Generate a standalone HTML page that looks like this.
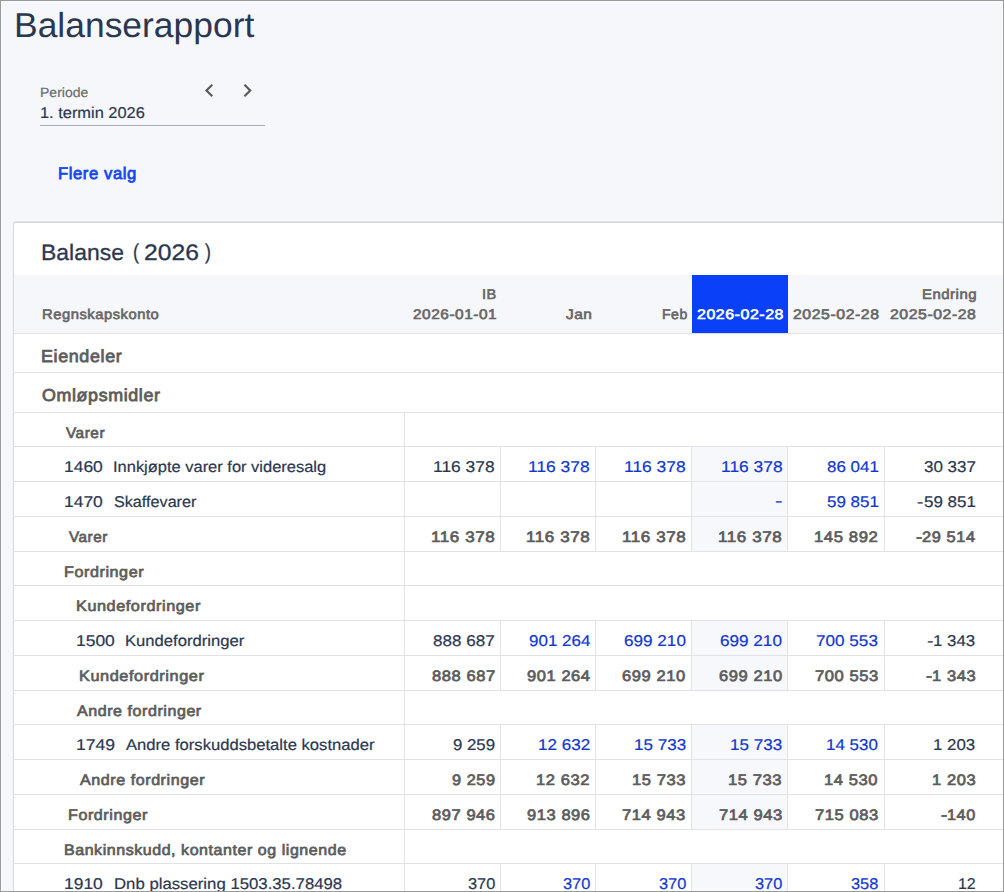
<!DOCTYPE html>
<html lang="no">
<head>
<meta charset="utf-8">
<title>Balanserapport</title>
<style>
html,body{margin:0;padding:0;width:1004px;height:892px;overflow:hidden}
#root{position:absolute;left:0;top:0;width:1004px;height:892px;overflow:hidden}
body{width:1004px;height:892px;position:relative;overflow:hidden;background:#f6f7fb;font-family:"Liberation Sans", sans-serif;text-rendering:geometricPrecision}
.t{position:absolute;white-space:pre;line-height:20px;display:block;transform-origin:0 0}
.b{position:absolute}
#panel{position:absolute;left:13px;top:222px;width:991px;height:670px;background:#fff;border:1px solid #d6d8dd;border-top-color:#d2d4d9;border-bottom:0;border-radius:3px 3px 0 0;box-sizing:border-box;box-shadow:0 -1px 0 #e4e6ea}
#frame{position:absolute;left:0;top:0;width:1004px;height:892px;box-sizing:border-box;border:1px solid #9a9a9a;z-index:9;pointer-events:none}
#frame2{position:absolute;left:1px;top:1px;width:1px;height:890px;background:#fbfcfe}
#frame3{position:absolute;left:1002px;top:1px;width:1px;height:890px;background:#fcfdfe}
#uline{position:absolute;left:40px;top:125px;width:225px;height:1px;background:#a9adb6}
svg.chev{position:absolute;overflow:visible}
</style>
</head>
<body>
<div id="root">
<div id="frame3"></div>
<div id="panel"></div>
<div class="b" style="left:692px;top:447px;width:95px;height:34px;background:#f7f8fc"></div>
<div class="b" style="left:692px;top:482px;width:95px;height:34px;background:#f7f8fc"></div>
<div class="b" style="left:692px;top:517px;width:95px;height:34px;background:#f7f8fc"></div>
<div class="b" style="left:692px;top:621px;width:95px;height:34px;background:#f7f8fc"></div>
<div class="b" style="left:692px;top:656px;width:95px;height:34px;background:#f7f8fc"></div>
<div class="b" style="left:692px;top:725px;width:95px;height:34px;background:#f7f8fc"></div>
<div class="b" style="left:692px;top:760px;width:95px;height:34px;background:#f7f8fc"></div>
<div class="b" style="left:692px;top:795px;width:95px;height:34px;background:#f7f8fc"></div>
<div class="b" style="left:692px;top:864px;width:95px;height:28px;background:#f7f8fc"></div>
<div class="b" style="left:14px;top:275px;width:989px;height:58px;background:#f6f7fb"></div>
<div class="b" style="left:692px;top:275px;width:96px;height:58px;background:#0a41f8"></div>
<div class="b" style="left:14px;top:333px;width:989px;height:1px;background:#e2e2e4"></div>
<div class="b" style="left:14px;top:372px;width:989px;height:1px;background:#e2e2e4"></div>
<div class="b" style="left:14px;top:412px;width:989px;height:1px;background:#e2e2e4"></div>
<div class="b" style="left:14px;top:446px;width:989px;height:1px;background:#e2e2e4"></div>
<div class="b" style="left:14px;top:481px;width:989px;height:1px;background:#e2e2e4"></div>
<div class="b" style="left:14px;top:516px;width:989px;height:1px;background:#e2e2e4"></div>
<div class="b" style="left:14px;top:551px;width:989px;height:1px;background:#e2e2e4"></div>
<div class="b" style="left:14px;top:585px;width:989px;height:1px;background:#e2e2e4"></div>
<div class="b" style="left:14px;top:620px;width:989px;height:1px;background:#e2e2e4"></div>
<div class="b" style="left:14px;top:655px;width:989px;height:1px;background:#e2e2e4"></div>
<div class="b" style="left:14px;top:690px;width:989px;height:1px;background:#e2e2e4"></div>
<div class="b" style="left:14px;top:724px;width:989px;height:1px;background:#e2e2e4"></div>
<div class="b" style="left:14px;top:759px;width:989px;height:1px;background:#e2e2e4"></div>
<div class="b" style="left:14px;top:794px;width:989px;height:1px;background:#e2e2e4"></div>
<div class="b" style="left:14px;top:829px;width:989px;height:1px;background:#e2e2e4"></div>
<div class="b" style="left:14px;top:863px;width:989px;height:1px;background:#e2e2e4"></div>
<div class="b" style="left:404px;top:412px;width:1px;height:480px;background:#e2e2e4"></div>
<div class="b" style="left:500px;top:446px;width:1px;height:35px;background:#e2e2e4"></div>
<div class="b" style="left:595px;top:446px;width:1px;height:35px;background:#e2e2e4"></div>
<div class="b" style="left:691px;top:446px;width:1px;height:35px;background:#e2e2e4"></div>
<div class="b" style="left:787px;top:446px;width:1px;height:35px;background:#e2e2e4"></div>
<div class="b" style="left:884px;top:446px;width:1px;height:35px;background:#e2e2e4"></div>
<div class="b" style="left:500px;top:481px;width:1px;height:35px;background:#e2e2e4"></div>
<div class="b" style="left:595px;top:481px;width:1px;height:35px;background:#e2e2e4"></div>
<div class="b" style="left:691px;top:481px;width:1px;height:35px;background:#e2e2e4"></div>
<div class="b" style="left:787px;top:481px;width:1px;height:35px;background:#e2e2e4"></div>
<div class="b" style="left:884px;top:481px;width:1px;height:35px;background:#e2e2e4"></div>
<div class="b" style="left:500px;top:516px;width:1px;height:35px;background:#e2e2e4"></div>
<div class="b" style="left:595px;top:516px;width:1px;height:35px;background:#e2e2e4"></div>
<div class="b" style="left:691px;top:516px;width:1px;height:35px;background:#e2e2e4"></div>
<div class="b" style="left:787px;top:516px;width:1px;height:35px;background:#e2e2e4"></div>
<div class="b" style="left:884px;top:516px;width:1px;height:35px;background:#e2e2e4"></div>
<div class="b" style="left:500px;top:620px;width:1px;height:35px;background:#e2e2e4"></div>
<div class="b" style="left:595px;top:620px;width:1px;height:35px;background:#e2e2e4"></div>
<div class="b" style="left:691px;top:620px;width:1px;height:35px;background:#e2e2e4"></div>
<div class="b" style="left:787px;top:620px;width:1px;height:35px;background:#e2e2e4"></div>
<div class="b" style="left:884px;top:620px;width:1px;height:35px;background:#e2e2e4"></div>
<div class="b" style="left:500px;top:655px;width:1px;height:35px;background:#e2e2e4"></div>
<div class="b" style="left:595px;top:655px;width:1px;height:35px;background:#e2e2e4"></div>
<div class="b" style="left:691px;top:655px;width:1px;height:35px;background:#e2e2e4"></div>
<div class="b" style="left:787px;top:655px;width:1px;height:35px;background:#e2e2e4"></div>
<div class="b" style="left:884px;top:655px;width:1px;height:35px;background:#e2e2e4"></div>
<div class="b" style="left:500px;top:724px;width:1px;height:35px;background:#e2e2e4"></div>
<div class="b" style="left:595px;top:724px;width:1px;height:35px;background:#e2e2e4"></div>
<div class="b" style="left:691px;top:724px;width:1px;height:35px;background:#e2e2e4"></div>
<div class="b" style="left:787px;top:724px;width:1px;height:35px;background:#e2e2e4"></div>
<div class="b" style="left:884px;top:724px;width:1px;height:35px;background:#e2e2e4"></div>
<div class="b" style="left:500px;top:759px;width:1px;height:35px;background:#e2e2e4"></div>
<div class="b" style="left:595px;top:759px;width:1px;height:35px;background:#e2e2e4"></div>
<div class="b" style="left:691px;top:759px;width:1px;height:35px;background:#e2e2e4"></div>
<div class="b" style="left:787px;top:759px;width:1px;height:35px;background:#e2e2e4"></div>
<div class="b" style="left:884px;top:759px;width:1px;height:35px;background:#e2e2e4"></div>
<div class="b" style="left:500px;top:794px;width:1px;height:35px;background:#e2e2e4"></div>
<div class="b" style="left:595px;top:794px;width:1px;height:35px;background:#e2e2e4"></div>
<div class="b" style="left:691px;top:794px;width:1px;height:35px;background:#e2e2e4"></div>
<div class="b" style="left:787px;top:794px;width:1px;height:35px;background:#e2e2e4"></div>
<div class="b" style="left:884px;top:794px;width:1px;height:35px;background:#e2e2e4"></div>
<div class="b" style="left:500px;top:863px;width:1px;height:29px;background:#e2e2e4"></div>
<div class="b" style="left:595px;top:863px;width:1px;height:29px;background:#e2e2e4"></div>
<div class="b" style="left:691px;top:863px;width:1px;height:29px;background:#e2e2e4"></div>
<div class="b" style="left:787px;top:863px;width:1px;height:29px;background:#e2e2e4"></div>
<div class="b" style="left:884px;top:863px;width:1px;height:29px;background:#e2e2e4"></div>
<div id="uline"></div>
<svg class="chev" style="left:0;top:0" width="300" height="120" viewBox="0 0 300 120"><g fill="#5b5b5b"><path transform="translate(196.1 77.3) scale(1.1)" d="M15.41 7.41L14 6l-6 6 6 6 1.41-1.41L10.83 12z"/><path transform="translate(234.2 77.3) scale(1.1)" d="M10 6L8.59 7.41 13.17 12l-4.58 4.59L10 18l6-6z"/></g></svg>
<span class="t" style="left:13.59px;top:16.00px;font-size:34.7px;color:#2b3750;transform:scaleX(1.0217)">Balanserapport</span>
<span class="t" style="left:39.75px;top:83.00px;font-size:13.4px;color:#6a6a6a;transform:scaleX(1.0458);-webkit-text-stroke:0.17px #6a6a6a">Periode</span>
<span class="t" style="left:39.75px;top:104.00px;font-size:15.6px;color:#2b3750;transform:scaleX(1.0510);-webkit-text-stroke:0.2px #2b3750">1. termin 2026</span>
<span class="t" style="left:57.61px;top:163.62px;font-size:16.8px;color:#1547ee;transform:scaleX(0.9916);letter-spacing:0.035em;-webkit-text-stroke:0.77px #1547ee">Flere valg</span>
<span class="t" style="left:41.11px;top:243.00px;font-size:22.4px;color:#2b3750;transform:scaleX(1.0249);-webkit-text-stroke:0.29px #2b3750">Balanse</span>
<span class="t" style="left:132.56px;top:242.00px;font-size:21.4px;color:#2b3750;transform:scaleX(0.8333);-webkit-text-stroke:0.28px #2b3750">(</span>
<span class="t" style="left:143.80px;top:243.00px;font-size:22.4px;color:#2b3750;transform:scaleX(1.1021);-webkit-text-stroke:0.29px #2b3750">2026</span>
<span class="t" style="left:204.60px;top:242.00px;font-size:21.4px;color:#2b3750;transform:scaleX(0.8333);-webkit-text-stroke:0.28px #2b3750">)</span>
<span class="t" style="left:42.01px;top:303.68px;font-size:14.0px;color:#666666;transform:scaleX(1.0551);letter-spacing:0.035em;-webkit-text-stroke:0.64px #666666">Regnskapskonto</span>
<span class="t" style="left:482.06px;top:283.68px;font-size:14.0px;color:#666666;transform:scaleX(1.0367);letter-spacing:0.035em;-webkit-text-stroke:0.64px #666666">IB</span>
<span class="t" style="left:412.53px;top:303.68px;font-size:14.0px;color:#666666;transform:scaleX(1.0993);letter-spacing:0.035em;-webkit-text-stroke:0.64px #666666">2026-01-01</span>
<span class="t" style="left:565.50px;top:303.68px;font-size:14.0px;color:#666666;transform:scaleX(1.1000);letter-spacing:0.035em;-webkit-text-stroke:0.64px #666666">Jan</span>
<span class="t" style="left:661.55px;top:303.68px;font-size:14.0px;color:#666666;transform:scaleX(1.0042);letter-spacing:0.035em;-webkit-text-stroke:0.64px #666666">Feb</span>
<span class="t" style="left:696.82px;top:303.68px;font-size:14.0px;color:#ffffff;transform:scaleX(1.1364);letter-spacing:0.035em;-webkit-text-stroke:0.64px #ffffff">2026-02-28</span>
<span class="t" style="left:793.32px;top:303.68px;font-size:14.0px;color:#666666;transform:scaleX(1.1311);letter-spacing:0.035em;-webkit-text-stroke:0.64px #666666">2025-02-28</span>
<span class="t" style="left:889.62px;top:303.68px;font-size:14.0px;color:#666666;transform:scaleX(1.1298);letter-spacing:0.035em;-webkit-text-stroke:0.64px #666666">2025-02-28</span>
<span class="t" style="left:921.50px;top:283.68px;font-size:14.0px;color:#666666;transform:scaleX(1.0660);letter-spacing:0.035em;-webkit-text-stroke:0.64px #666666">Endring</span>
<span class="t" style="left:41.36px;top:345.60px;font-size:17.3px;color:#5c5c5c;transform:scaleX(1.0364);letter-spacing:0.035em;-webkit-text-stroke:0.8px #5c5c5c">Eiendeler</span>
<span class="t" style="left:41.88px;top:384.60px;font-size:17.3px;color:#5c5c5c;transform:scaleX(1.0321);letter-spacing:0.035em;-webkit-text-stroke:0.8px #5c5c5c">Omløpsmidler</span>
<span class="t" style="left:65.81px;top:423.65px;font-size:15.1px;color:#5c5c5c;transform:scaleX(1.0156);letter-spacing:0.035em;-webkit-text-stroke:0.69px #5c5c5c">Varer</span>
<span class="t" style="left:64.18px;top:458.00px;font-size:15.6px;color:#2b3750;transform:scaleX(1.1188);-webkit-text-stroke:0.2px #2b3750">1460</span>
<span class="t" style="left:113.48px;top:458.00px;font-size:15.6px;color:#2b3750;transform:scaleX(1.0553);-webkit-text-stroke:0.2px #2b3750">Innkjøpte varer for videresalg</span>
<span class="t" style="left:433.28px;top:458.00px;font-size:15.6px;color:#2b3750;transform:scaleX(1.1163);-webkit-text-stroke:0.2px #2b3750">116 378</span>
<span class="t" style="left:528.38px;top:458.00px;font-size:15.6px;color:#1237cf;transform:scaleX(1.1163);-webkit-text-stroke:0.2px #1237cf">116 378</span>
<span class="t" style="left:624.38px;top:458.00px;font-size:15.6px;color:#1237cf;transform:scaleX(1.1163);-webkit-text-stroke:0.2px #1237cf">116 378</span>
<span class="t" style="left:720.58px;top:458.00px;font-size:15.6px;color:#1237cf;transform:scaleX(1.1163);-webkit-text-stroke:0.2px #1237cf">116 378</span>
<span class="t" style="left:826.51px;top:458.00px;font-size:15.6px;color:#1237cf;transform:scaleX(1.0892);-webkit-text-stroke:0.2px #1237cf">86 041</span>
<span class="t" style="left:923.61px;top:458.00px;font-size:15.6px;color:#2b3750;transform:scaleX(1.0892);-webkit-text-stroke:0.2px #2b3750">30 337</span>
<span class="t" style="left:64.18px;top:493.00px;font-size:15.6px;color:#2b3750;transform:scaleX(1.1188);-webkit-text-stroke:0.2px #2b3750">1470</span>
<span class="t" style="left:114.02px;top:493.00px;font-size:15.6px;color:#2b3750;transform:scaleX(1.0369);-webkit-text-stroke:0.2px #2b3750">Skaffevarer</span>
<span class="t" style="left:775.38px;top:492.00px;font-size:15.6px;color:#1237cf;transform:scaleX(1.4500);-webkit-text-stroke:0.2px #1237cf">-</span>
<span class="t" style="left:826.51px;top:493.00px;font-size:15.6px;color:#1237cf;transform:scaleX(1.0892);-webkit-text-stroke:0.2px #1237cf">59 851</span>
<span class="t" style="left:923.61px;top:493.00px;font-size:15.6px;color:#2b3750;transform:scaleX(1.0892);-webkit-text-stroke:0.2px #2b3750">59 851</span>
<span class="t" style="left:917.12px;top:493.00px;font-size:15.6px;color:#2b3750;transform:scaleX(1.2500);-webkit-text-stroke:0.2px #2b3750">-</span>
<span class="t" style="left:69.00px;top:527.65px;font-size:15.1px;color:#5c5c5c;transform:scaleX(1.0078);letter-spacing:0.035em;-webkit-text-stroke:0.69px #5c5c5c">Varer</span>
<span class="t" style="left:431.06px;top:527.65px;font-size:15.1px;color:#5c5c5c;transform:scaleX(1.1261);letter-spacing:0.035em;-webkit-text-stroke:0.69px #5c5c5c">116 378</span>
<span class="t" style="left:526.16px;top:527.65px;font-size:15.1px;color:#5c5c5c;transform:scaleX(1.1261);letter-spacing:0.035em;-webkit-text-stroke:0.69px #5c5c5c">116 378</span>
<span class="t" style="left:622.16px;top:527.65px;font-size:15.1px;color:#5c5c5c;transform:scaleX(1.1261);letter-spacing:0.035em;-webkit-text-stroke:0.69px #5c5c5c">116 378</span>
<span class="t" style="left:718.36px;top:527.65px;font-size:15.1px;color:#5c5c5c;transform:scaleX(1.1261);letter-spacing:0.035em;-webkit-text-stroke:0.69px #5c5c5c">116 378</span>
<span class="t" style="left:814.37px;top:527.65px;font-size:15.1px;color:#5c5c5c;transform:scaleX(1.1062);letter-spacing:0.035em;-webkit-text-stroke:0.69px #5c5c5c">145 892</span>
<span class="t" style="left:921.86px;top:527.65px;font-size:15.1px;color:#5c5c5c;transform:scaleX(1.0860);letter-spacing:0.035em;-webkit-text-stroke:0.69px #5c5c5c">29 514</span>
<span class="t" style="left:915.79px;top:527.65px;font-size:15.1px;color:#5c5c5c;transform:scaleX(1.2222);letter-spacing:0.035em;-webkit-text-stroke:0.69px #5c5c5c">-</span>
<span class="t" style="left:64.23px;top:562.65px;font-size:15.1px;color:#5c5c5c;transform:scaleX(1.0694);letter-spacing:0.035em;-webkit-text-stroke:0.69px #5c5c5c">Fordringer</span>
<span class="t" style="left:76.12px;top:596.65px;font-size:15.1px;color:#5c5c5c;transform:scaleX(1.0754);letter-spacing:0.035em;-webkit-text-stroke:0.69px #5c5c5c">Kundefordringer</span>
<span class="t" style="left:75.78px;top:632.00px;font-size:15.6px;color:#2b3750;transform:scaleX(1.1188);-webkit-text-stroke:0.2px #2b3750">1500</span>
<span class="t" style="left:125.07px;top:632.00px;font-size:15.6px;color:#2b3750;transform:scaleX(1.0661);-webkit-text-stroke:0.2px #2b3750">Kundefordringer</span>
<span class="t" style="left:433.45px;top:632.00px;font-size:15.6px;color:#2b3750;transform:scaleX(1.0932);-webkit-text-stroke:0.2px #2b3750">888 687</span>
<span class="t" style="left:528.56px;top:632.00px;font-size:15.6px;color:#1237cf;transform:scaleX(1.0883);-webkit-text-stroke:0.2px #1237cf">901 264</span>
<span class="t" style="left:624.28px;top:632.00px;font-size:15.6px;color:#1237cf;transform:scaleX(1.0982);-webkit-text-stroke:0.2px #1237cf">699 210</span>
<span class="t" style="left:720.48px;top:632.00px;font-size:15.6px;color:#1237cf;transform:scaleX(1.0982);-webkit-text-stroke:0.2px #1237cf">699 210</span>
<span class="t" style="left:816.48px;top:632.00px;font-size:15.6px;color:#1237cf;transform:scaleX(1.0982);-webkit-text-stroke:0.2px #1237cf">700 553</span>
<span class="t" style="left:933.22px;top:632.00px;font-size:15.6px;color:#2b3750;transform:scaleX(1.0800);-webkit-text-stroke:0.2px #2b3750">1 343</span>
<span class="t" style="left:927.27px;top:632.00px;font-size:15.6px;color:#2b3750;transform:scaleX(1.2500);-webkit-text-stroke:0.2px #2b3750">-</span>
<span class="t" style="left:79.42px;top:666.65px;font-size:15.1px;color:#5c5c5c;transform:scaleX(1.0797);letter-spacing:0.035em;-webkit-text-stroke:0.69px #5c5c5c">Kundefordringer</span>
<span class="t" style="left:431.63px;top:666.65px;font-size:15.1px;color:#5c5c5c;transform:scaleX(1.0965);letter-spacing:0.035em;-webkit-text-stroke:0.69px #5c5c5c">888 687</span>
<span class="t" style="left:526.73px;top:666.65px;font-size:15.1px;color:#5c5c5c;transform:scaleX(1.0917);letter-spacing:0.035em;-webkit-text-stroke:0.69px #5c5c5c">901 264</span>
<span class="t" style="left:622.45px;top:666.65px;font-size:15.1px;color:#5c5c5c;transform:scaleX(1.0965);letter-spacing:0.035em;-webkit-text-stroke:0.69px #5c5c5c">699 210</span>
<span class="t" style="left:718.65px;top:666.65px;font-size:15.1px;color:#5c5c5c;transform:scaleX(1.0965);letter-spacing:0.035em;-webkit-text-stroke:0.69px #5c5c5c">699 210</span>
<span class="t" style="left:814.65px;top:666.65px;font-size:15.1px;color:#5c5c5c;transform:scaleX(1.0965);letter-spacing:0.035em;-webkit-text-stroke:0.69px #5c5c5c">700 553</span>
<span class="t" style="left:931.68px;top:666.65px;font-size:15.1px;color:#5c5c5c;transform:scaleX(1.0916);letter-spacing:0.035em;-webkit-text-stroke:0.69px #5c5c5c">1 343</span>
<span class="t" style="left:925.89px;top:666.65px;font-size:15.1px;color:#5c5c5c;transform:scaleX(1.2222);letter-spacing:0.035em;-webkit-text-stroke:0.69px #5c5c5c">-</span>
<span class="t" style="left:77.43px;top:701.65px;font-size:15.1px;color:#5c5c5c;transform:scaleX(1.0616);letter-spacing:0.035em;-webkit-text-stroke:0.69px #5c5c5c">Andre fordringer</span>
<span class="t" style="left:75.77px;top:736.00px;font-size:15.6px;color:#2b3750;transform:scaleX(1.1273);-webkit-text-stroke:0.2px #2b3750">1749</span>
<span class="t" style="left:125.70px;top:736.00px;font-size:15.6px;color:#2b3750;transform:scaleX(1.0657);-webkit-text-stroke:0.2px #2b3750">Andre forskuddsbetalte kostnader</span>
<span class="t" style="left:452.96px;top:736.00px;font-size:15.6px;color:#2b3750;transform:scaleX(1.0763);-webkit-text-stroke:0.2px #2b3750">9 259</span>
<span class="t" style="left:538.16px;top:736.00px;font-size:15.6px;color:#1237cf;transform:scaleX(1.0924);-webkit-text-stroke:0.2px #1237cf">12 632</span>
<span class="t" style="left:634.16px;top:736.00px;font-size:15.6px;color:#1237cf;transform:scaleX(1.0924);-webkit-text-stroke:0.2px #1237cf">15 733</span>
<span class="t" style="left:730.36px;top:736.00px;font-size:15.6px;color:#1237cf;transform:scaleX(1.0924);-webkit-text-stroke:0.2px #1237cf">15 733</span>
<span class="t" style="left:826.36px;top:736.00px;font-size:15.6px;color:#1237cf;transform:scaleX(1.0865);-webkit-text-stroke:0.2px #1237cf">14 530</span>
<span class="t" style="left:933.22px;top:736.00px;font-size:15.6px;color:#2b3750;transform:scaleX(1.0800);-webkit-text-stroke:0.2px #2b3750">1 203</span>
<span class="t" style="left:80.33px;top:770.65px;font-size:15.1px;color:#5c5c5c;transform:scaleX(1.0641);letter-spacing:0.035em;-webkit-text-stroke:0.69px #5c5c5c">Andre fordringer</span>
<span class="t" style="left:451.83px;top:770.65px;font-size:15.1px;color:#5c5c5c;transform:scaleX(1.0777);letter-spacing:0.035em;-webkit-text-stroke:0.69px #5c5c5c">9 259</span>
<span class="t" style="left:536.28px;top:770.65px;font-size:15.1px;color:#5c5c5c;transform:scaleX(1.0974);letter-spacing:0.035em;-webkit-text-stroke:0.69px #5c5c5c">12 632</span>
<span class="t" style="left:632.28px;top:770.65px;font-size:15.1px;color:#5c5c5c;transform:scaleX(1.0974);letter-spacing:0.035em;-webkit-text-stroke:0.69px #5c5c5c">15 733</span>
<span class="t" style="left:728.48px;top:770.65px;font-size:15.1px;color:#5c5c5c;transform:scaleX(1.0974);letter-spacing:0.035em;-webkit-text-stroke:0.69px #5c5c5c">15 733</span>
<span class="t" style="left:824.48px;top:770.65px;font-size:15.1px;color:#5c5c5c;transform:scaleX(1.0974);letter-spacing:0.035em;-webkit-text-stroke:0.69px #5c5c5c">14 530</span>
<span class="t" style="left:931.68px;top:770.65px;font-size:15.1px;color:#5c5c5c;transform:scaleX(1.0916);letter-spacing:0.035em;-webkit-text-stroke:0.69px #5c5c5c">1 203</span>
<span class="t" style="left:67.93px;top:805.65px;font-size:15.1px;color:#5c5c5c;transform:scaleX(1.0667);letter-spacing:0.035em;-webkit-text-stroke:0.69px #5c5c5c">Fordringer</span>
<span class="t" style="left:431.63px;top:805.65px;font-size:15.1px;color:#5c5c5c;transform:scaleX(1.0917);letter-spacing:0.035em;-webkit-text-stroke:0.69px #5c5c5c">897 946</span>
<span class="t" style="left:526.73px;top:805.65px;font-size:15.1px;color:#5c5c5c;transform:scaleX(1.0917);letter-spacing:0.035em;-webkit-text-stroke:0.69px #5c5c5c">913 896</span>
<span class="t" style="left:622.45px;top:805.65px;font-size:15.1px;color:#5c5c5c;transform:scaleX(1.0965);letter-spacing:0.035em;-webkit-text-stroke:0.69px #5c5c5c">714 943</span>
<span class="t" style="left:718.65px;top:805.65px;font-size:15.1px;color:#5c5c5c;transform:scaleX(1.0965);letter-spacing:0.035em;-webkit-text-stroke:0.69px #5c5c5c">714 943</span>
<span class="t" style="left:814.65px;top:805.65px;font-size:15.1px;color:#5c5c5c;transform:scaleX(1.0965);letter-spacing:0.035em;-webkit-text-stroke:0.69px #5c5c5c">715 083</span>
<span class="t" style="left:946.79px;top:805.65px;font-size:15.1px;color:#5c5c5c;transform:scaleX(1.0772);letter-spacing:0.035em;-webkit-text-stroke:0.69px #5c5c5c">140</span>
<span class="t" style="left:940.99px;top:805.65px;font-size:15.1px;color:#5c5c5c;transform:scaleX(1.2222);letter-spacing:0.035em;-webkit-text-stroke:0.69px #5c5c5c">-</span>
<span class="t" style="left:64.34px;top:840.65px;font-size:15.1px;color:#5c5c5c;transform:scaleX(1.0589);letter-spacing:0.035em;-webkit-text-stroke:0.69px #5c5c5c">Bankinnskudd, kontanter og lignende</span>
<span class="t" style="left:64.28px;top:875.00px;font-size:15.6px;color:#2b3750;transform:scaleX(1.1188);-webkit-text-stroke:0.2px #2b3750">1910</span>
<span class="t" style="left:113.56px;top:875.00px;font-size:15.6px;color:#2b3750;transform:scaleX(1.0741);-webkit-text-stroke:0.2px #2b3750">Dnb plassering 1503.35.78498</span>
<span class="t" style="left:467.62px;top:875.00px;font-size:15.6px;color:#2b3750;transform:scaleX(1.0500);-webkit-text-stroke:0.2px #2b3750">370</span>
<span class="t" style="left:562.73px;top:875.00px;font-size:15.6px;color:#1237cf;transform:scaleX(1.0500);-webkit-text-stroke:0.2px #1237cf">370</span>
<span class="t" style="left:658.73px;top:875.00px;font-size:15.6px;color:#1237cf;transform:scaleX(1.0500);-webkit-text-stroke:0.2px #1237cf">370</span>
<span class="t" style="left:754.93px;top:875.00px;font-size:15.6px;color:#1237cf;transform:scaleX(1.0500);-webkit-text-stroke:0.2px #1237cf">370</span>
<span class="t" style="left:850.93px;top:875.00px;font-size:15.6px;color:#1237cf;transform:scaleX(1.0500);-webkit-text-stroke:0.2px #1237cf">358</span>
<span class="t" style="left:957.68px;top:875.00px;font-size:15.6px;color:#2b3750;transform:scaleX(1.0222);-webkit-text-stroke:0.2px #2b3750">12</span>
<div id="frame2"></div>
<div id="frame"></div>
</div>
</body>
</html>
